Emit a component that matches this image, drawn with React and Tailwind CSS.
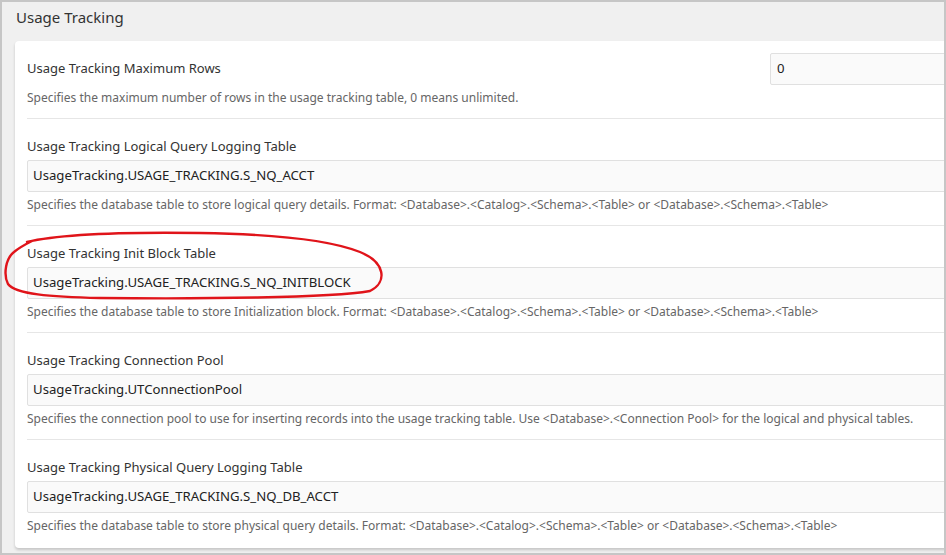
import React from 'react';

const rows = [
  {
    label: 'Usage Tracking Logical Query Logging Table',
    value: 'UsageTracking.USAGE_TRACKING.S_NQ_ACCT',
    desc: 'Specifies the database table to store logical query details. Format: <Database>.<Catalog>.<Schema>.<Table> or <Database>.<Schema>.<Table>',
  },
  {
    label: 'Usage Tracking Init Block Table',
    value: 'UsageTracking.USAGE_TRACKING.S_NQ_INITBLOCK',
    desc: 'Specifies the database table to store Initialization block. Format: <Database>.<Catalog>.<Schema>.<Table> or <Database>.<Schema>.<Table>',
    marked: true,
  },
  {
    label: 'Usage Tracking Connection Pool',
    value: 'UsageTracking.UTConnectionPool',
    desc: 'Specifies the connection pool to use for inserting records into the usage tracking table. Use <Database>.<Connection Pool> for the logical and physical tables.',
  },
  {
    label: 'Usage Tracking Physical Query Logging Table',
    value: 'UsageTracking.USAGE_TRACKING.S_NQ_DB_ACCT',
    desc: 'Specifies the database table to store physical query details. Format: <Database>.<Catalog>.<Schema>.<Table> or <Database>.<Schema>.<Table>',
  },
];

const font = { fontFamily: '"Noto Sans", sans-serif' };

// hand-drawn red circle around the init block row (coords relative to row top)
const Marker = () => (
  <svg className="absolute left-[-27px] top-0 pointer-events-none" width="400" height="80" viewBox="0 0 400 80">
    <path
      d="M27 16 C60 8 130 6 200 7 C270 8 330 14 360 26 C385 36 388 56 370 65 C330 72 200 73 100 72 C50 71 15 68 8 58 C3 48 6 32 14 26 C20 21 26 18 32 15"
      fill="none"
      stroke="#e0141a"
      strokeWidth="2.4"
      strokeLinecap="round"
      strokeLinejoin="round"
    />
  </svg>
);

const SettingRow = ({ row, last }) => (
  <div className={`relative border-t border-[#e6e6e6] pt-[18px] ${last ? 'pb-[14px]' : 'pb-[12px]'}`}>
    <div className="text-[13px] leading-[18px] text-[#333]">{row.label}</div>
    <div className="mt-[5px] h-[32px] w-full rounded-[2px] border border-[#e0e0e0] bg-[#fafafa] px-[5px] flex items-center text-[13.2px] text-[#222]">
      {row.value}
    </div>
    <div className="mt-[5px] text-[12px] leading-[16px] text-[#666]">{row.desc}</div>
    {row.marked && <Marker />}
  </div>
);

export default function App() {
  return (
    <div style={font} className="w-[946px] h-[555px] overflow-hidden border-2 border-[#c6c6c6] bg-[#f0f0f0]">
      <div className="h-[39px] pl-[14px] pt-[4px] text-[15px] leading-[22px] text-[#333]">Usage Tracking</div>
      <div className="pl-[13px]">
        <div className="w-[960px] rounded-[4px] bg-white px-[12px] shadow-[0_2px_3px_rgba(0,0,0,0.18)]">
          <div className="flex items-center pt-[12px]">
            <div className="flex-1 text-[13px] text-[#333]">Usage Tracking Maximum Rows</div>
            <div className="h-[32px] w-[193px] rounded-[2px] border border-[#e0e0e0] bg-[#fafafa] px-[6px] flex items-center text-[13.2px] text-[#222]">
              0
            </div>
          </div>
          <div className="mt-[5px] pb-[12px] text-[12px] leading-[16px] text-[#666]">
            Specifies the maximum number of rows in the usage tracking table, 0 means unlimited.
          </div>
          {rows.map((row, i) => (
            <SettingRow key={row.label} row={row} last={i === rows.length - 1} />
          ))}
        </div>
      </div>
    </div>
  );
}
